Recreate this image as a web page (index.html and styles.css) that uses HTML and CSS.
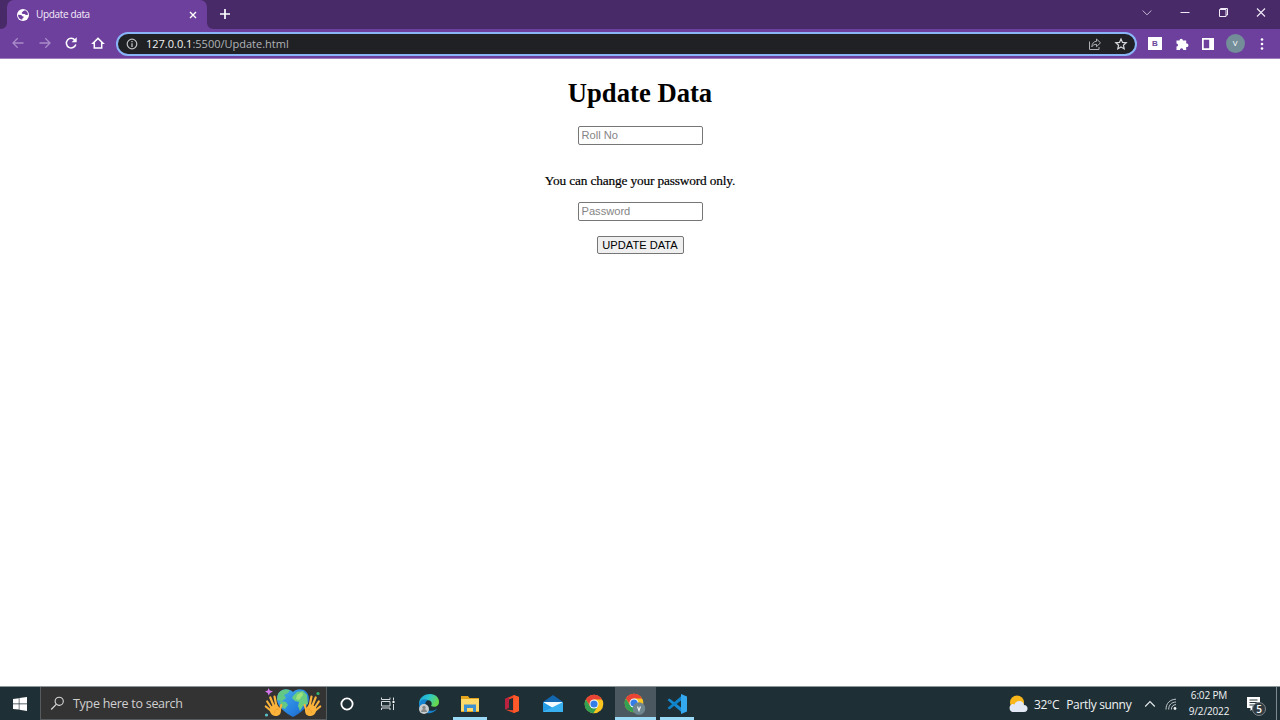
FILE: index.html
```html
<!DOCTYPE html>
<html lang="en">
<head>
<meta charset="utf-8">
<title>Update data</title>
<link rel="stylesheet" href="styles.css">
</head>
<body>
<header class="tabstrip">
  <svg class="flare" width="7" height="7" viewBox="0 0 7 7"><path d="M7 0v7H0C5 7 7 4 7 0Z" fill="#6e409e"/></svg>
  <div class="tab">
    <svg class="globe" width="12" height="12" viewBox="0 0 12 12"><circle cx="6" cy="6" r="6" fill="#fff"/><path d="M1 5.800 4.300 6l1 1.200 1.400.4-.4 1.500-1 .3v1.300C2.700 10.600 1 8.500 1 5.800ZM6 2.200 8 1.300c1.700.7 3 2.300 3 4.400L8.800 6 7.700 5 5.600 5.100 4.600 4Z" fill="#6e409e"/></svg>
    <span class="tab-title">Update data</span>
    <svg class="tab-close" width="8" height="8" viewBox="0 0 8 8"><path d="m1 1 6 6M7 1 1 7" stroke="#fff" stroke-width="1.400"/></svg>
  </div>
  <svg class="flare" width="7" height="7" viewBox="0 0 7 7"><path d="M0 0v7h7C2 7 0 4 0 0Z" fill="#6e409e"/></svg>
  <svg class="newtab" width="12" height="12" viewBox="0 0 12 12"><path d="M6 1v10M1 6h10" stroke="#fff" stroke-width="1.700"/></svg>
  <div class="window-buttons">
    <svg width="38" height="26" viewBox="0 0 38 26"><path d="m14.700 10.500 4.300 4.400 4.300-4.400" fill="none" stroke="#c5b5d6"/></svg>
    <svg width="38" height="26" viewBox="0 0 38 26"><path d="M14.500 12.500h9" stroke="#f1eaf8"/></svg>
    <svg width="38" height="26" viewBox="0 0 38 26"><path d="M15.500 9.500h6.500v7h-6.500ZM16.500 9V8.500h7V15H22" fill="none" stroke="#f1eaf8"/></svg>
    <svg width="38" height="26" viewBox="0 0 38 26"><path d="m15 8.500 8 8m0-8-8 8" stroke="#f1eaf8" stroke-width="1.100"/></svg>
  </div>
</header>
<nav class="toolbar">
  <div class="nav-buttons">
    <svg width="14" height="14" viewBox="0 0 14 14"><path d="M12.500 7H2m4.700-4.800L2 7l4.700 4.800" fill="none" stroke="#a98bc8" stroke-width="1.300"/></svg>
    <svg width="14" height="14" viewBox="0 0 14 14"><path d="M1.500 7H12M7.300 2.200 12 7l-4.700 4.800" fill="none" stroke="#a98bc8" stroke-width="1.300"/></svg>
    <svg width="14" height="14" viewBox="0 0 14 14"><path d="M11 4.200A4.800 4.800 0 1 0 11.800 8.500" fill="none" stroke="#fff" stroke-width="1.500"/><path d="M12.700 1.200v5H7.600Z" fill="#fff"/></svg>
    <svg width="14" height="14" viewBox="0 0 14 14"><path d="M3.300 12V7.200H2L7 2.400l5 4.800h-1.300V12Z" fill="none" stroke="#fff" stroke-width="1.500"/></svg>
  </div>
  <div class="omnibox">
    <svg width="12" height="12" viewBox="0 0 12 12"><circle cx="6" cy="6" r="4.800" fill="none" stroke="#bfc1c5" stroke-width="1.200"/><path d="M6 5.300V9M6 3v1.300" stroke="#bfc1c5" stroke-width="1.300"/></svg>
    <span class="url"><b>127.0.0.1</b>:5500/Update.html</span>
    <svg class="share" width="14" height="14" viewBox="0 0 14 14"><path d="M1.500 4.500v8h9.500V10M8.500 2v2.300C5.600 4.500 4.200 6.300 3.800 9.800 5 8 6.300 7.300 8.500 7.300v2.400l4-3.850Z" fill="none" stroke="#aeb0b4" stroke-width="1"/></svg>
    <svg class="star" width="14" height="14" viewBox="0 0 14 14"><path d="m7 2 1.500 3.400 3.700.4-2.800 2.400.8 3.700L7 10l-3.200 1.900.8-3.700-2.800-2.400 3.700-.4Z" fill="none" stroke="#d8dade" stroke-width="1.200"/></svg>
  </div>
  <div class="extensions">
    <span class="ext-b">B</span>
    <svg width="14" height="14" viewBox="0 0 14 14"><path d="M1.500 3.500h3a1.700 1.700 0 1 1 3.400 0h3.300v3a1.800 1.800 0 1 1 0 3.500v3H8.300a1.700 1.700 0 1 0-3.400 0H1.500V9.500a1.500 1.500 0 1 0 0-3Z" fill="#fff"/></svg>
    <svg width="14" height="14" viewBox="0 0 14 14"><path d="M1 1h12v12H1ZM2.700 2.800v8.400h5.500V2.800Z" fill="#fff" fill-rule="evenodd"/></svg>
    <span class="avatar">V</span>
    <svg width="14" height="14" viewBox="0 0 14 14" fill="#fff"><circle cx="7" cy="2.500" r="1.300"/><circle cx="7" cy="7" r="1.300"/><circle cx="7" cy="11.500" r="1.300"/></svg>
  </div>
</nav>
<main class="page">
  <h1 class="heading">Update Data</h1>
  <input class="field" type="text" placeholder="Roll No">
  <p class="note">You can change your password only.</p>
  <input class="field" type="password" placeholder="Password">
  <button class="submit" type="button">UPDATE DATA</button>
</main>
<footer class="taskbar">
  <div class="start"><svg width="14" height="14" viewBox="0 0 14 14"><path d="m0 2 5.800-.8v5.400H0ZM6.400 1.100 14 0v6.600H6.400ZM0 7.200h5.800v5.400L0 11.900ZM6.400 7.200H14V14l-7.600-1.200Z" fill="#fff"/></svg></div>
  <div class="search">
    <svg width="15" height="15" viewBox="0 0 15 15"><circle cx="9.200" cy="5.300" r="4.100" fill="none" stroke="#d8d8d8" stroke-width="1.100"/><path d="m6.200 8.300-5 5.200" stroke="#d8d8d8" stroke-width="1.200"/></svg>
    <span class="search-text">Type here to search</span>
    <svg class="earth" width="60" height="32" viewBox="0 0 60 32">
      <defs><linearGradient id="sea" x1="0" y1="0" x2="1" y2="1"><stop offset="0" stop-color="#4bb7e8"/><stop offset=".6" stop-color="#2580df"/><stop offset="1" stop-color="#2355ae"/></linearGradient><clipPath id="heart"><path d="M29 5C24 0 13 2 13 12c0 8 9 14 16 18 7-4 16-10 16-18C45 2 34 0 29 5Z"/></clipPath>
      <g id="hand"><path d="M3.200 14.500 7.500 21M6.300 10.500l3.700 9M10.500 9.500l1.800 9M1.800 19.500l6 5M17.300 18l-1.800 6" stroke="#fbb33b" stroke-width="2.200" stroke-linecap="round"/><path d="m6 20 6.500-3.500 3 4.500 1.300 1c.7 5-1.800 7-4.800 7C8 29.500 5 25.500 6 20Z" fill="#fbb33b"/><path d="M10.500 26c0-3 2-4.500 4.500-3.500" fill="none" stroke="#ed972d" stroke-width=".7"/></g></defs>
      <g clip-path="url(#heart)"><path d="M12 0h36v32H12Z" fill="url(#sea)"/><path d="m14 5 7-3 5 1-2 3-4 2 2 3-4 3-5-1Zm2 9 6 1 2 3-3 4-4-2Z" fill="#62c886"/><path d="m29 9 4-4 6-1 4 4 1 9-5 2-3 5-2-5 1-4-4-1-3-3Z" fill="#68cd83"/><path d="m33 8 5-3 1 3-4 5-3-1Z" fill="#a0e37a"/></g>
      <use href="#hand"/><use href="#hand" transform="matrix(-1 0 0 1 58 0)"/>
      <path d="m4.500 1 1.300 2.400L9 4.500 6 6 4.800 8.500 3.700 6 1 4.500l2.700-1Z" fill="#d477ed"/><circle cx="54" cy="6.500" r="1.600" fill="#35b46b"/><circle cx="2.500" cy="28" r="1.600" fill="#5bbfc3"/>
    </svg>
  </div>
  <div class="apps">
    <div class="app"><svg width="16" height="16" viewBox="0 0 16 16"><circle cx="8" cy="8" r="5.600" fill="none" stroke="#fff" stroke-width="1.800"/></svg></div>
    <div class="app"><svg width="16" height="16" viewBox="0 0 16 16"><path d="M1.500 1.500V3.500h8.500V1.500M1.500 14v-2h8.500v2M1.500 5.500h8.500v4.500H1.500ZM13.500 1.500v3M13.500 8v6" fill="none" stroke="#d9dddf"/><path d="M12.500 5h2v2h-2Z" fill="#fff"/></svg></div>
    <div class="app"><svg width="22" height="22" viewBox="0 0 22 22"><defs><linearGradient id="edge" x1="0" x2="1" y2=".4"><stop stop-color="#169bd7"/><stop offset=".5" stop-color="#2bc6cf"/><stop offset="1" stop-color="#65d84e"/></linearGradient></defs><path d="M1 11C1 4 7 1 12 1c6 0 9 4 9 8s-4 6-8 4c2-3 0-6-4-6-4 0-7 2-8 6Z" fill="url(#edge)"/><path d="M1 11c1-4 5-6 9-4-3 1-4 6-1 9 3 3 7 2 10-.5C16 22 1 23 1 11Z" fill="#1683d0"/><circle cx="6" cy="16" r="5" fill="#c9cccd"/><circle cx="6" cy="14.500" r="1.700" fill="#888"/><path d="M3 19c0-4 6-4 6 0Z" fill="#888"/></svg></div>
    <div class="app open"><svg width="20" height="18" viewBox="0 0 20 18"><path d="M1 1h7l1.500 2H19v14H1Z" fill="#e7a51d"/><path d="M1 4h18v12H1Z" fill="#ffd969"/><path d="M4 17V9.500h12V17h-3v-4H7v4Z" fill="#3d91d1"/></svg></div>
    <div class="app"><svg width="16" height="20" viewBox="0 0 16 20"><path d="M1 5 10 1l5 2v14l-5 2-9-3.500 8 .7V4L4 5.800v8L1 15Z" fill="#ed4626"/><path d="m9.500 1 5.500 2v14l-5.500 2Z" fill="#ff5b2a"/><path d="M1 5 5 3v11l-4 1.200Z" fill="#bb223f"/></svg></div>
    <div class="app"><svg width="20" height="20" viewBox="0 0 20 20"><path d="M0 8 10 1l10 7v10H0Z" fill="#1267ae"/><path d="M1 8h18v10H1Z" fill="#f3fbff"/><path d="m0 8 10 6L0 18Z" fill="#229be4"/><path d="M20 8v10H0l10-5Z" fill="#39b0f0"/></svg></div>
    <div class="app"><svg width="20" height="20" viewBox="0 0 20 20"><g id="chrome"><circle cx="10" cy="10" r="9.300" fill="#fbc520"/><path d="M1.800 5.400a9.300 9.300 0 0 1 16.300.1H10L6.200 12.200Z" fill="#e94335"/><path d="M1.800 5.400A9.300 9.300 0 0 0 9.300 19.300l4.600-7H6Z" fill="#34a052"/><circle cx="10" cy="10" r="4.500" fill="#fff"/><circle cx="10" cy="10" r="3.600" fill="#327de7"/></g></svg></div>
    <div class="app open active"><svg width="22" height="22" viewBox="0 0 22 22"><use href="#chrome"/><circle cx="15" cy="15.500" r="6.300" fill="#70868f"/><path d="m13.500 13.500 1.500 4 1.500-4" fill="none" stroke="#e8eef0" stroke-width="1.200"/></svg></div>
    <div class="app open"><svg width="22" height="22" viewBox="0 0 22 22"><path d="m1.500 7 2-1.500L17 16v4.500Z" fill="#168bd3"/><path d="m1.500 15 2 1.500L17 6V1.500Z" fill="#0e83c8"/><path d="m15 1 6 2.500v15L15 21Z" fill="#35a9ef"/></svg></div>
  </div>
  <div class="tray">
    <svg class="weather-icon" width="20" height="18" viewBox="0 0 20 18"><circle cx="9" cy="7.500" r="7" fill="#f9b719"/><path d="M4.500 17A4.200 4.200 0 0 1 4.500 9c1 0 1.300.2 2 .5C8 4.800 15.500 5 16 10c5 .3 4.500 7 0 7Z" fill="#e2e9f5"/></svg>
    <span class="weather"><span>32°C</span><span>Partly sunny</span></span>
    <svg class="caret" width="12" height="8" viewBox="0 0 12 8"><path d="m1.200 6.500 4.800-5 4.800 5" fill="none" stroke="#e7ecee" stroke-width="1.100"/></svg>
    <svg class="wifi" width="12" height="12" viewBox="0 0 12 12"><g fill="none" stroke="#bec6ca"><path d="M1 11.500C1 5 5 1.500 11 1.200M3.700 11.500c0-4.600 2.700-7.300 7.300-7.500M6.400 11.500c0-3 1.600-4.700 4.600-4.900"/></g><circle cx="10" cy="10.500" r="1.400" fill="#eef1f2"/></svg>
    <div class="clock"><span>6:02 PM</span><span>9/2/2022</span></div>
    <div class="notifications"><svg width="15" height="14" viewBox="0 0 15 14"><path d="M1 0h13v11H7.500l-3 3v-3H1Z" fill="#fff"/><path d="M3.500 3h8M3.500 5.500h8M3.500 8h5" stroke="#26343b"/></svg><span class="badge">5</span></div>
    <span class="desktop-edge"></span>
  </div>
</footer>
</body>
</html>
```
FILE: styles.css
```css
* { box-sizing: border-box; }
body { margin: 0; width: 1280px; height: 720px; overflow: hidden; display: flex; flex-direction: column; background: #fff; font-family: "Open Sans", sans-serif; }
svg { display: block; flex: none; }
span { white-space: nowrap; }

.tabstrip { height: 29px; flex: none; display: flex; align-items: flex-start; background: #472a67; }
.flare { align-self: flex-end; }
.tab { width: 200px; height: 29px; display: flex; align-items: center; padding: 0 10px; border-radius: 7px 7px 0 0; background: #6e409e; }
.tab-title { margin: -2px 0 0 7px; width: 100px; color: #f4eef9; font-size: 10px; letter-spacing: -.35px; }
.tab-close { margin-left: auto; }
.newtab { margin: 8px 0 0 5px; }
.window-buttons { display: flex; margin-left: auto; }

.toolbar { height: 30px; flex: none; display: flex; align-items: center; background: #6e409e; border-bottom: 1px solid #9f80bd; }
.nav-buttons { width: 116px; display: flex; gap: 12.700px; padding: 0 0 1px 11px; }
.omnibox { width: 1021px; height: 24px; display: flex; align-items: center; padding: 0 7px 0 8px; border: 2px solid #8ab4f8; border-radius: 12px; background: #202124; }
.url { margin-left: 8px; color: #b2b4b8; font-size: 11px; }
.url b { color: #f0f1f3; font-weight: 400; }
.share { margin-left: auto; }
.star { margin-left: 12px; }
.extensions { display: flex; align-items: center; margin-left: 11px; gap: 12.700px; }
.ext-b { width: 14px; height: 13px; background: #fff; color: #68459a; font: bold 8px/13px "Liberation Sans", sans-serif; text-align: center; }
.avatar { width: 19px; height: 19px; margin: 0 -2.500px; border-radius: 50%; background: #738d99; color: #fff; font-size: 8px; line-height: 18px; text-align: center; }

.page { flex: 1; display: flex; flex-direction: column; align-items: center; }
.heading { margin: 19px 0 0; font: bold 26.670px/30px "Liberation Serif", serif; color: #000; }
.field { width: 125px; height: 19px; margin: 18px 0 0; padding: 0 3px 2px; border: 1px solid #767676; border-radius: 2px; font: 11.110px "Liberation Sans", sans-serif; }
.field::placeholder { color: #858585; }
.note { margin: 28px 0 -5px; font: 13.330px/16px "Liberation Serif", serif; letter-spacing: -.15px; color: #000; -webkit-text-stroke: .2px #000; }
.submit { width: 87px; height: 18px; margin: 15px 0 0; padding: 0 0 1px; border: 1px solid #767676; border-radius: 2px; background: #efefef; color: #000; font: 11.110px/14px "Liberation Sans", sans-serif; }

.taskbar { height: 34px; flex: none; display: flex; background: #1f2f36; border-top: 1px solid #8d969a; }
.start { width: 40px; display: flex; align-items: center; justify-content: center; }
.search { width: 287px; display: flex; align-items: center; padding: 0 2px 0 9px; border: 1px solid #565b5d; border-top: 0; background: #333; }
.search-text { margin-left: 8px; color: #d0d0d0; font: 12.500px "Open Sans", sans-serif; letter-spacing: -.28px; }
.earth { margin-left: auto; }
.apps { display: grid; grid-template-columns: repeat(9, 41.250px); margin-left: -1px; }
.app { display: flex; align-items: center; justify-content: center; }
.open { background: linear-gradient(#9bdaf7, #9bdaf7) center bottom / 34px 3px no-repeat; }
.active { background: linear-gradient(#9bdaf7, #9bdaf7) center bottom / 100% 3px no-repeat, #4b585f; }
.tray { flex: 1; display: flex; align-items: center; justify-content: flex-end; color: #f0f3f4; }
.weather-icon { margin-right: 6px; }
.weather { display: flex; gap: 7px; width: 97px; padding-top: 1px; font-size: 12px; letter-spacing: -.32px; }
.caret { margin-left: 13px; }
.wifi { margin-left: 9px; }
.clock { width: 48px; margin-left: 8px; display: flex; flex-direction: column; align-items: center; font-size: 10px; line-height: 15.500px; letter-spacing: -.15px; }
.notifications { position: relative; margin: 0 15px 0 13px; }
.badge { position: absolute; left: 6px; top: 5px; width: 14px; height: 14px; border: 1px solid #7d858a; border-radius: 50%; background: #303b41; color: #fff; font-size: 10px; font-weight: 600; line-height: 12px; text-align: center; }
.desktop-edge { width: 1px; height: 33px; margin-right: 3px; background: #7c888d; }
```
